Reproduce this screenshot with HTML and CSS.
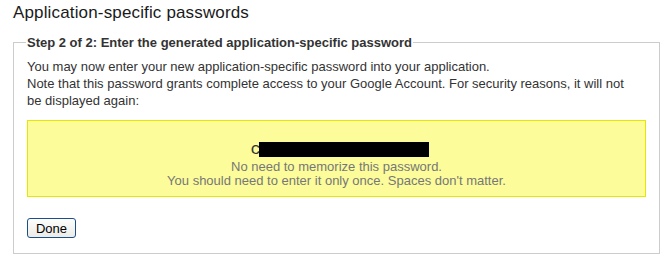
FILE: index.html
```html
<!DOCTYPE html>
<html>
<head>
<meta charset="utf-8">
<link rel="stylesheet" href="styles.css">
</head>
<body>
<h1 class="title">Application-specific passwords</h1>
<fieldset class="step">
  <legend class="step-legend">Step 2 of 2: Enter the generated application-specific password</legend>
  <p class="intro">You may now enter your new application-specific password into your application.<br>Note that this password grants complete access to your Google Account. For security reasons, it will not be displayed again:</p>
  <div class="pw-box">
    <div class="pw"><span class="pw-first">c</span><span class="redact"></span></div>
    <div class="pw-note">No need to memorize this password.<br>You should need to enter it only once. Spaces don't matter.</div>
  </div>
  <button class="done">Done</button>
</fieldset>
</body>
</html>
```

FILE: styles.css
```css
body {
  margin: 0;
  padding: 0 12px 0 13px;
  font-family: "Liberation Sans", Arial, sans-serif;
  background: #fff;
  color: #333;
}
.title {
  margin: 0;
  padding-top: 2px;
  font-size: 17px;
  letter-spacing: 0.15px;
  font-weight: normal;
  color: #1a1a1a;
  line-height: 22px;
  height: 33px;
}
.step {
  margin: 0;
  width: 647px;
  box-sizing: border-box;
  border: 1px solid #ccc;
  padding: 0 13px 15px 13px;
}
.step-legend {
  font-weight: bold;
  font-size: 13px;
  color: #333;
  padding: 0 1px;
  margin-left: -1px;
}
.intro {
  margin: 8px 0 0 0;
  font-size: 13px;
  line-height: 17px;
  max-width: 600px;
}
.pw-box {
  margin-top: 11px;
  background: #fcfc9a;
  border: 1px solid #e6e600;
  height: 77px;
  box-sizing: border-box;
  text-align: center;
  padding-top: 20px;
}
.pw {
  height: 17px;
  display: flex;
  justify-content: center;
  align-items: center;
  padding-left: 6px;
}
.pw-first {
  font-family: "Liberation Mono", "Courier New", monospace;
  font-size: 17px;
  line-height: 17px;
  color: #333;
  margin-right: -2px;
}
.redact {
  display: inline-block;
  width: 170px;
  height: 15px;
  background: #000;
}
.pw-note {
  font-size: 13px;
  line-height: 14px;
  color: #777;
  margin-top: 2px;
}
.done {
  display: block;
  margin-top: 21px;
  width: 49px;
  height: 20px;
  font-family: "Liberation Sans", Arial, sans-serif;
  font-size: 13px;
  color: #000;
  background: linear-gradient(#fefefe, #ecebe6);
  border: 1px solid #1c4f85;
  border-radius: 3px;
  padding: 0;
}
```
